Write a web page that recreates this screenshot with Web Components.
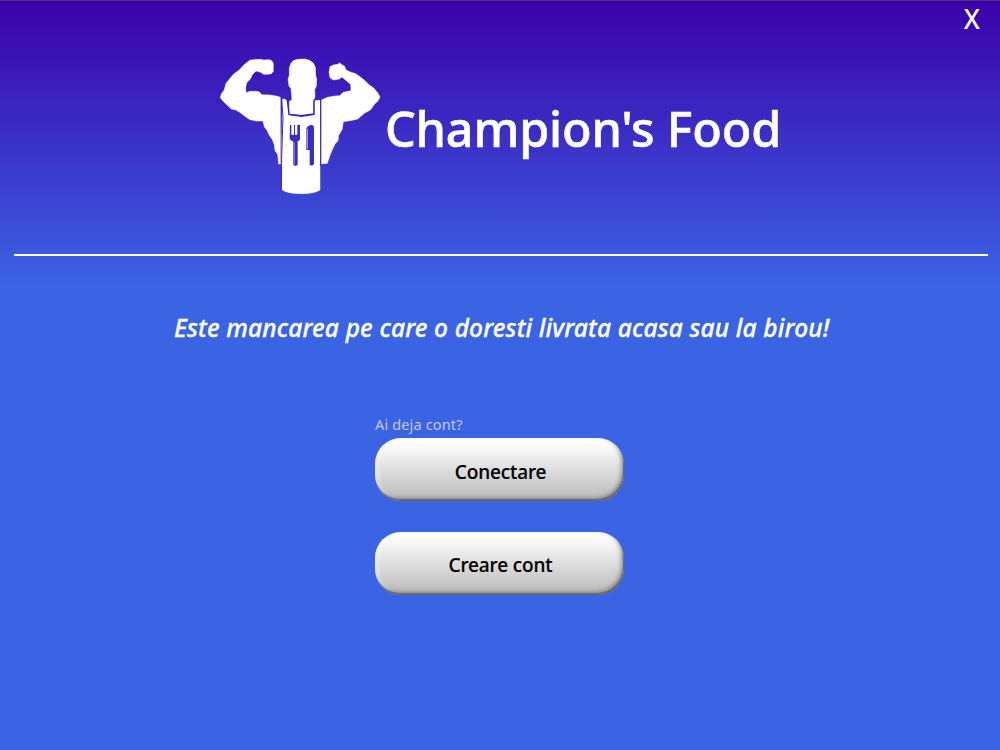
<!DOCTYPE html>
<html lang="ro"><head><meta charset="utf-8"><title>Champion's Food</title>
<style>html,body{margin:0;height:100%;overflow:hidden}</style></head>
<body><food-welcome></food-welcome>
<script>
const define = (name, html) => {
  const t = document.createElement('template');
  t.innerHTML = html;
  customElements.define(name, class extends HTMLElement {
    constructor(){ super(); this.attachShadow({mode:'open'}).append(t.content.cloneNode(true)); }
  });
};

define('champion-logo', `<style>:host{display:block;width:180px;height:150px}svg{display:block}</style>
<svg width="180" height="150" viewBox="0 0 540 450">
<g fill="#fff" stroke="#fff" stroke-width="1.5">
<path d="M119 31L130 29L150 28L162 30L178 29L186 33L190 41L190 64L184 71L174 73L161 73L152 67L138 63L127 74L121 87L110 98L107 113L108 129L119 124L139 124L148 126L155 134L181 135L202 139L211 142L211 342L206 342L203 313L195 302L193 284L186 267L178 256L171 241L163 231L159 213L140 213L120 209L104 198L91 188L78 180L64 177L48 162L39 153L31 143L34 132L43 119L48 100L58 88L71 72L88 60L99 47Z"/>
<path d="M252 31L264 28L285 27L298 31L310 39L316 52L317 78L320 87L319 108L314 119L315 141L310 151V191L273 196L238 191V154L246 150L243 116L237 108L234 88L238 76V54L243 39Z"/>
<path d="M360 50L370 45L383 43L389 39L396 44L404 49L408 60L421 66L437 71L450 80L466 93L478 105L491 114L503 128L510 141L504 153L493 163L482 179L463 190L443 207L427 211L400 215L396 239L386 256L384 272L375 282L366 301L359 319L352 340L334 342V150L353 142L374 138L389 137L400 127L423 122L422 103L409 92L396 81L388 87L370 90L360 83L357 67Z"/>
<path d="M218 147L224 147L232 154L237 196L274 202L313 196L314 152L330 151L330 420Q314 431 274 431Q231 431 216 419L214 335Z"/>
</g>
<path d="M214 144L219 200L215 320L214 420M332 150V347" fill="none" stroke="#3b21bd" stroke-width="3"/>
<path d="M232 148L237 193L274 197L312 192V151" fill="none" stroke="#3b1cba" stroke-width="4"/>
<path d="M240 225H244V254H252V225H255V254H262V225H270V263Q270 273 263 273V345Q256 350 249 345V273Q239 271 239 263Z" fill="#3b2cc4"/>
<path d="M289 236Q294 224 307 225Q312 226 312 235V342Q306 350 299 344V300H289Z" fill="#3b2cc4"/>
<path d="M292 236V296M252 276V344" stroke="#9990e5" stroke-width="4"/>
</svg>`);

define('close-button', `<style>:host{display:block}button{all:unset;display:block;font:500 26.5px/38px "Noto Sans",sans-serif;color:#fff}</style><button><slot></slot></button>`);

define('glossy-button', `<style>:host{display:block;width:249px;height:63px}
button{all:unset;box-sizing:border-box;display:block;width:249px;height:63px;padding:var(--label-top,5px) 0 0 2px;text-align:center;font:500 19px/58px "Noto Sans",sans-serif;letter-spacing:-.1px;-webkit-text-stroke:.2px #000;color:#000;border-radius:26px;background:linear-gradient(#fff 0,#fafafa 14%,#dedede 50%,#b8b8b8 100%);box-shadow:inset -1px -2px 1px #686868,inset -3px -3px 4px rgba(80,80,80,.5),inset 3px 0 4px rgba(255,255,255,.5)}
span{display:block}</style><button><span><slot></slot></span></button>`);

define('brand-header', `<style>:host{display:flex;box-sizing:border-box;height:254px;padding:50px 0 0 210px;align-items:flex-start}
h1{margin:45px 0 0 -5px;font:500 48.5px/66px "Noto Sans",sans-serif;color:#fff;white-space:nowrap;letter-spacing:-.18px;-webkit-text-stroke:.6px #fff}</style><champion-logo></champion-logo><h1><slot></slot></h1>`);

define('food-welcome', `<style>
:host{display:flex;flex-direction:column;position:relative;width:1000px;height:750px;overflow:hidden;box-sizing:border-box;background:linear-gradient(#3c00a8 0,#3b0cb0 35px,#3b64e5 290px)}
.edge{position:absolute;inset:0 0 auto;height:1px;background:#49367e}
close-button{position:absolute;top:0;right:20px}
hr{box-sizing:border-box;width:974px;height:2px;margin:0 0 0 14px;border:0;background:#fff;flex:none}
p{margin:54px 0 0 174px;font:italic 500 24.5px/36px "Noto Sans",sans-serif;letter-spacing:.155px;-webkit-text-stroke:.3px #fff;color:#fff;white-space:nowrap}
section{margin:68px 0 0 375px;width:250px;display:flex;flex-direction:column}
label{font:14.5px/20px "Noto Sans",sans-serif;letter-spacing:.15px;color:#c4c8df;height:24px;white-space:nowrap}
glossy-button+glossy-button{margin-top:31px;--label-top:3px}
</style><div class="edge"></div><close-button>X</close-button><brand-header>Champion's Food</brand-header><hr>
<p>Este mancarea pe care o doresti livrata acasa sau la birou!</p>
<section><label>Ai deja cont?</label><glossy-button>Conectare</glossy-button><glossy-button>Creare cont</glossy-button></section>`);
</script></body></html>
